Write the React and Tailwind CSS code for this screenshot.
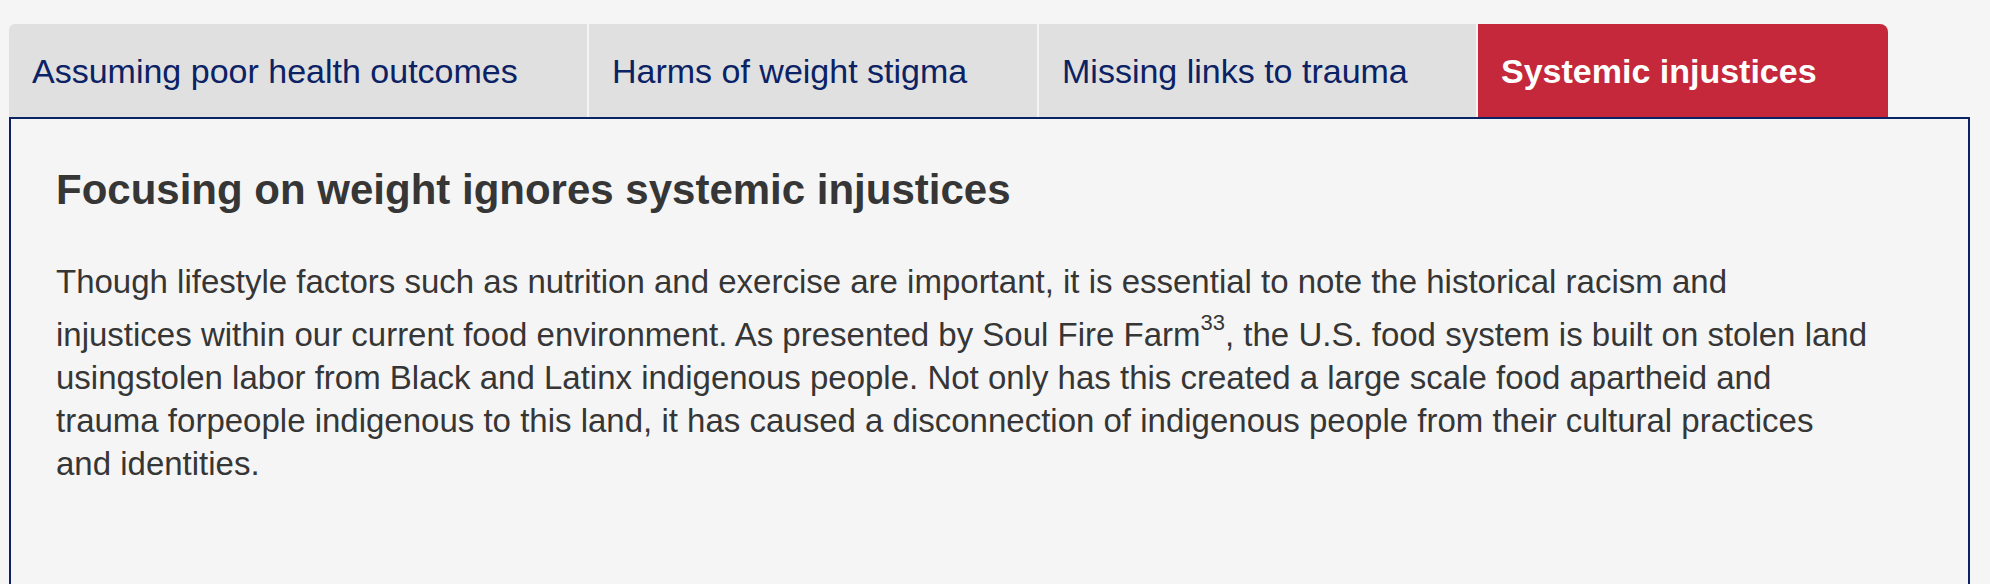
import { useState } from 'react'

const TABS = [
  { id: 'outcomes', label: 'Assuming poor health outcomes', width: 'w-[578px]', corner: 'rounded-tl-[6px]' },
  { id: 'stigma', label: 'Harms of weight stigma', width: 'w-[448px]', corner: '' },
  { id: 'trauma', label: 'Missing links to trauma', width: 'w-[437px]', corner: '' },
  { id: 'systemic', label: 'Systemic injustices', width: 'w-[410px]', corner: 'rounded-tr-[8px]' },
]

function Tab({ tab, active, onClick }) {
  return (
    <button
      onClick={() => onClick(tab.id)}
      className={`${tab.width} ${tab.corner} h-[93px] shrink-0 flex items-center pl-[23px] text-left text-[34px] leading-none ${
        active ? 'bg-[#c4283a] text-white font-bold' : 'bg-[#e0e0e0] text-[#0b2265]'
      }`}
    >
      {tab.label}
    </button>
  )
}

function SystemicPanel() {
  return (
    <div>
      <h2 className="text-[42px] leading-[50px] font-bold text-[#363636]">
        Focusing on weight ignores systemic injustices
      </h2>
      <p className="mt-[45px] text-[33px] leading-[43px] text-[#363636] whitespace-nowrap">
        Though lifestyle factors such as nutrition and exercise are important, it is essential to note the historical
        racism and
        <br />
        injustices within our current food environment. As presented by Soul Fire Farm
        <sup className="static align-[16px] text-[22px] leading-[40px]">33</sup>, the U.S. food system is built on stolen
        land
        <br />
        usingstolen labor from Black and Latinx indigenous people. Not only has this created a large scale food
        apartheid and
        <br />
        trauma forpeople indigenous to this land, it has caused a disconnection of indigenous people from their cultural
        practices
        <br />
        and identities.
      </p>
    </div>
  )
}

export default function App() {
  const [active, setActive] = useState('systemic')

  return (
    <div
      className="min-h-screen bg-[#f5f5f5] pt-6 pl-[9px] pr-[20px] overflow-hidden"
      style={{ fontFamily: '"Liberation Sans", Arial, sans-serif' }}
    >
      <div className="flex gap-[2px]">
        {TABS.map((t) => (
          <Tab key={t.id} tab={t} active={t.id === active} onClick={setActive} />
        ))}
      </div>
      <div className="h-[540px] border-2 border-[#0b2265] bg-[#f5f5f5] px-[45px] pt-[46px]">
        {active === 'systemic' && <SystemicPanel />}
      </div>
    </div>
  )
}
